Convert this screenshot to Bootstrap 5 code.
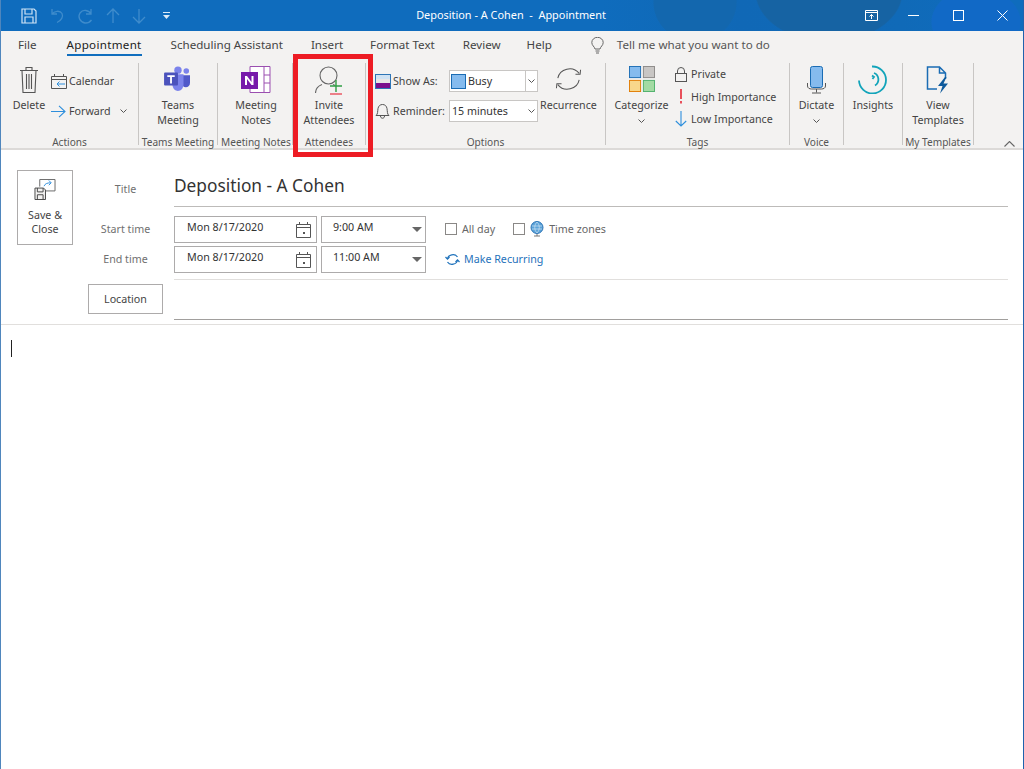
<!DOCTYPE html>
<html lang="en">
  <head>
    <meta charset="UTF-8" />
    <title>Deposition - A Cohen - Appointment</title>
    <link href="https://cdn.jsdelivr.net/npm/bootstrap@5.3.0/dist/css/bootstrap.min.css" rel="stylesheet" />
    <style>
      html, body { height: 100%; overflow: hidden; }
      body { font-family: "Noto Sans", "Open Sans", sans-serif; font-size: 10.7px; color: #444; background: #fff; }
      .app-frame { height: 769px; border-left: 1px solid #4f86bd; border-right: 1px solid #1f62ad; position: relative; display: flex; flex-direction: column; }

      /* title bar */
      .title-bar { height: 31px; flex: none; color: #fff; position: relative; display: flex; background:
          radial-gradient(ellipse 74px 50px at 828px -8px, #1663a3 98%, transparent),
          radial-gradient(ellipse 42px 40px at 694px 2px, #1367ae 98%, transparent),
          radial-gradient(ellipse 45px 34px at 975px 22px, #1169c6 98%, transparent),
          linear-gradient(90deg, #0f6cbd 0 600px, #1068b6 740px, #106ab8 900px, #0f6cbd 1000px); }
      .qat { padding-left: 20px; gap: 12px; display: flex; align-items: center; }
      .qat-drop { margin-left: 4px; }
      .doc-title { left: -2px; right: 0; top: 7px; text-align: center; font-size: 10.9px; position: absolute; }
      .win-btns { margin-left: auto; display: flex; position: relative; }
      .win-btn { width: 46px; height: 31px; display: flex; align-items: center; justify-content: center; }
      .win-restore { width: 39px; }
      .win-min { width: 44px; }
      .win-close { width: 42px; }

      /* tabs */
      .tab-row { height: 29px; flex: none; background: #f3f2f1; padding-left: 17px; font-size: 11.6px; align-items: flex-start; }
      .tab-row .nav-link { padding: 0; color: #444; height: 25px; line-height: 28px; position: relative; }
      .tab-row .nav-link.sel { color: #222; letter-spacing: .3px; }
      .tab-row .nav-link.sel::after { content: ""; position: absolute; left: 0; right: 0; bottom: 0; height: 2px; background: #106ebe; }
      .tab-file { margin-right: 30px; }
      .tab-appt { margin-right: 29px; }
      .tab-sched { margin-right: 28px; }
      .tab-insert { margin-right: 27px; }
      .tab-format { margin-right: 28px; }
      .tab-review { margin-right: 26px; }
      .tab-help { margin-right: 39px; }
      .tell-me { color: #555; gap: 13px; height: 28px; }

      /* ribbon */
      .ribbon { height: 90px; flex: none; background: #f3f2f1; border-bottom: 2px solid #dcdad8; display: flex; position: relative; }
      .rgroup { height: 82px; display: flex; flex-direction: column; border-right: 1px solid #c8c6c4; flex: none; margin-top: 3px; }
      .rgroup-body { flex: 1; display: flex; min-height: 0; }
      .rgroup-name { height: 14px; line-height: 14px; text-align: center; color: #555; font-size: 10.1px; white-space: nowrap; margin-bottom: -4px; margin-top: -10px; flex: none; }
      .w-actions { width: 138px; } .w-teams { width: 79px; } .w-notes { width: 75px; } .w-att { width: 73px; }
      .w-opts { width: 240px; } .w-tags { width: 184px; } .w-voice { width: 54px; } .w-ins { width: 59px; } .w-tpl { width: 71px; }
      .w-notes .rgroup-name { padding-left: 2px; }
      .big-btn { display: flex; flex-direction: column; align-items: center; text-align: center; line-height: 15px; white-space: nowrap; color: #444; padding-top: 3px; }
      .big-btn svg { display: block; flex: none; }
      .big-btn .txt { margin-top: 4px; }
      .btn-delete { margin-left: 11px; width: 34px; }
      .btn-delete .txt { margin-top: 4px; }
      .btn-teams .txt { margin-top: 7px; }
      .btn-notes { padding-left: 2px; }
      .btn-notes .txt { margin-top: 5px; }
      .btn-invite .txt { margin-top: 3px; }
      .btn-recur { margin-left: 2px; }
      .btn-recur .txt { margin-top: 6px; }
      .btn-categ { margin-left: 10px; width: 51px; }
      .btn-categ .txt { margin-top: 6px; }
      .btn-insights { padding-top: 2px; }
      .btn-insights .txt { margin-top: 4px; }
      .btn-view .txt { margin-top: 4px; }
      .caret-mini { width: 7px; height: 4px; flex: none; }
      .big-btn .caret-mini { margin-top: 6px; }
      .mini-row { display: flex; align-items: center; white-space: nowrap; }
      .action-col { margin-left: 5px; }
      .action-row { height: 22px; }
      .action-cal { margin-top: 7px; }
      .action-fwd { margin-top: 8px; }
      .action-cal span { margin-left: 2px; }
      .action-fwd span { margin-left: 3px; }
      .action-fwd .caret-mini { margin-left: 9px; }
      .opt-col { margin-left: 9px; width: 163px; }
      .opt-show { margin-top: 7px; }
      .opt-remind { margin-top: 8px; }
      .opt-ico { width: 18px; flex: none; }
      .opt-lbl { width: 56px; flex: none; }
      .combo-box { background: #fff; border: 1px solid #c8c6c4; height: 22px; width: 89px; display: flex; align-items: center; color: #333; }
      .combo-remind { padding-left: 2px; }
      .combo-remind .caret-mini { margin-left: auto; margin-right: 2px; }
      .busy-swatch { width: 15px; height: 15px; background: #85bbee; border: 1px solid #1a6cb4; margin-left: 1px; margin-right: 2px; flex: none; }
      .combo-drop { margin-left: auto; width: 12px; height: 100%; border-left: 1px solid #c8c6c4; display: flex; align-items: center; justify-content: center; }
      .tag-col { margin-left: 8px; }
      .tag-row { height: 22.5px; gap: 4px; }
      .collapse-mark { position: absolute; right: 8px; bottom: 1px; }
      .red-mark { position: absolute; left: 292px; top: 54px; width: 80px; height: 103px; border: 5px solid #ed1c24; z-index: 5; pointer-events: none; }

      /* form */
      .appt-form { height: 175px; flex: none; border-bottom: 1px solid #e1dfdd; color: #666; display: flex; }
      .save-close { width: 56px; height: 75px; margin: 20px 0 0 16px; border: 1px solid #adabab; border-radius: 0; background: #fff; color: #444; font-size: 10.7px; line-height: 14px; padding: 0; flex: none; }
      .save-close svg { display: block; margin: 0 auto 8px; }
      .form-side { margin-left: 15px; flex: 1; margin-right: 15px; }
      .lbl-col { width: 75px; flex: none; text-align: center; color: #707070; }
      .title-line { height: 57px; display: flex; }
      .title-lbl { padding-top: 31px; }
      .title-field { flex: 1; margin-left: 11px; height: 38px; margin-top: 19px; border-bottom: 1px solid #bdbbb9; font-size: 17.3px; color: #333; line-height: 33px; }
      .time-row { height: 27px; margin-top: 3px; display: flex; align-items: center; }
      .time-start { margin-top: 9px; }
      .field-box { height: 27px; border: 1px solid #adabab; color: #333; display: flex; align-items: center; background: #fff; }
      .date-field { width: 143px; margin-left: 11px; padding-left: 12px; padding-bottom: 4px; }
      .date-field svg { margin-left: auto; margin-right: 5px; margin-top: 4px; }
      .time-field { width: 105px; margin-left: 4px; padding-left: 11px; padding-bottom: 4px; }
      .tri-down { margin-left: auto; margin-right: 3px; margin-top: 4px; width: 0; height: 0; border-left: 5px solid transparent; border-right: 5px solid transparent; border-top: 5px solid #666; }
      .after-time { margin-left: 19px; display: flex; align-items: center; }
      input.form-check-input.check-box[type=checkbox] { width: 12px; height: 12px; margin: 0 5px 0 0; border: 1px solid #8a8886; border-radius: 0; flex: none; }
      input.form-check-input.tz-check[type=checkbox] { margin-left: 18px; }
      .tz-text { margin-left: 5px; }
      .make-rec { color: #1f72bb; gap: 4px; }
      .thin-line { height: 1px; background: #e1dfdd; margin-left: 86px; margin-top: 6px; }
      .loc-row { display: flex; margin-top: 4px; }
      .loc-btn { width: 75px; height: 30px; border: 1px solid #adabab; border-radius: 0; background: #fff; color: #444; font-size: 10.7px; padding: 0; }
      .loc-field { flex: 1; margin-left: 11px; height: 36px; border-bottom: 1px solid #a19f9d; }
      .body-area { flex: 1; padding: 15px 0 0 10px; }
      .text-caret { width: 1px; height: 17px; background: #222; }
    </style>
  </head>
  <body>
    <div class="app-frame">
      <div class="title-bar">
        <div class="qat">
          <svg width="16" height="16" viewBox="0 0 16 16" fill="none" stroke="#cfe3f5" stroke-width="1.2"><path d="M1 1h12l2 2v12H1z"/><path d="M4 1v5h7V1M4 15V9h8v6"/></svg>
          <svg width="16" height="16" viewBox="0 0 16 16" fill="none" stroke="#3f8ccc" stroke-width="1.3"><path d="M3 1v5h5M3 6c2-3 8-4 10-.5 1.500 3-.5 7-5 9"/></svg>
          <svg width="17" height="16" viewBox="0 0 17 16" fill="none" stroke="#3f8ccc" stroke-width="1.3"><path d="M14 1v5H9M14 6C12 2 6 1 3 5c-2.500 4 0 9 5 10 3 .2 5-1 6.500-3"/></svg>
          <svg width="14" height="16" viewBox="0 0 14 16" fill="none" stroke="#3f8ccc" stroke-width="1.3"><path d="M7 15V1M1 7l6-6 6 6"/></svg>
          <svg width="14" height="16" viewBox="0 0 14 16" fill="none" stroke="#3f8ccc" stroke-width="1.3"><path d="M7 1v14M1 9l6 6 6-6"/></svg>
          <svg class="qat-drop" width="9" height="8" viewBox="0 0 9 8" fill="#dcebf7"><rect x="1" y="0" width="7" height="1"/><path d="M1 3h7L4.500 7z"/></svg>
        </div>
        <div class="doc-title">Deposition - A Cohen&nbsp; -&nbsp; Appointment</div>
        <div class="win-btns">
          <div class="win-btn win-restore"><svg width="13" height="11" viewBox="0 0 13 11" fill="none" stroke="#fff"><path d="M.5.500h12v10H.5zM.5 2.500h12M6.500 9V4.500M4.500 6.500l2-2 2 2"/></svg></div>
          <div class="win-btn win-min"><svg width="11" height="11" viewBox="0 0 11 11" stroke="#fff"><path d="M0 5.500h11"/></svg></div>
          <div class="win-btn"><svg width="11" height="11" viewBox="0 0 11 11" fill="none" stroke="#fff"><rect x=".5" y=".5" width="10" height="10"/></svg></div>
          <div class="win-btn win-close"><svg width="11" height="11" viewBox="0 0 11 11" stroke="#fff"><path d="M.5.500l10 10M10.500.500l-10 10"/></svg></div>
        </div>
      </div>

      <ul class="nav tab-row flex-nowrap">
        <li class="nav-item tab-file"><a class="nav-link">File</a></li>
        <li class="nav-item tab-appt"><a class="nav-link sel">Appointment</a></li>
        <li class="nav-item tab-sched"><a class="nav-link">Scheduling Assistant</a></li>
        <li class="nav-item tab-insert"><a class="nav-link">Insert</a></li>
        <li class="nav-item tab-format"><a class="nav-link">Format Text</a></li>
        <li class="nav-item tab-review"><a class="nav-link">Review</a></li>
        <li class="nav-item tab-help"><a class="nav-link">Help</a></li>
        <li class="nav-item d-flex align-items-center tell-me">
          <svg width="13" height="17" viewBox="0 0 13 17" fill="none" stroke="#666"><path d="M4 12C3.500 9.500.8 8.500.8 5.500a5.700 5.200 0 0 1 11.400 0c0 3-2.700 4-3.200 6.500zM4.500 14h4M5 16h3"/></svg>
          <span>Tell me what you want to do</span>
        </li>
      </ul>

      <div class="ribbon">
        <div class="rgroup w-actions">
          <div class="rgroup-body">
            <div class="big-btn btn-delete">
              <svg width="20" height="28" viewBox="0 0 20 28" fill="none" stroke="#555" stroke-width="1.1"><path d="M1 4.500h18M7 4V1.500h6V4M3 4.500l1 22h12l1-22M7.500 8v15M10 8v15M12.500 8v15"/></svg>
              <span class="txt">Delete</span>
            </div>
            <div class="action-col">
              <div class="mini-row action-row action-cal">
                <svg width="16" height="15" viewBox="0 0 16 15" fill="none" stroke="#555"><path d="M.5 2.500h15v12H.5zM.5 5.500h15M3.500 0v3M12.500 0v3"/><path d="M14 10H6M8.500 7.500 6 10l2.500 2.500" stroke="#2e8fdc"/></svg>
                <span>Calendar</span>
              </div>
              <div class="mini-row action-row action-fwd">
                <svg width="15" height="13" viewBox="0 0 15 13" fill="none" stroke="#2e8fdc" stroke-width="1.1"><path d="M0 6.500h14M8 .8l6 5.700-6 5.700"/></svg>
                <span>Forward</span>
                <svg class="caret-mini" viewBox="0 0 7 4" fill="none" stroke="#555"><path d="M.5.500 3.500 3.500 6.500.500"/></svg>
              </div>
            </div>
          </div>
          <div class="rgroup-name">Actions</div>
        </div>

        <div class="rgroup w-teams">
          <div class="rgroup-body justify-content-center">
            <div class="big-btn btn-teams">
              <svg width="27" height="25" viewBox="0 0 29 27">
                <circle cx="24" cy="5.500" r="3" fill="#7b83eb"/><path d="M19 10h9v8c0 3-2 5-4.500 5S19 21 19 18z" fill="#5059c9"/>
                <circle cx="15" cy="4.500" r="4" fill="#7b83eb"/><path d="M9 9h12v11c0 4-3 7-6 7s-6-3-6-7z" fill="#7b83eb"/>
                <rect x="0" y="7" width="15" height="14" rx="1" fill="#4b53bc"/><path d="M3.500 10h8v2H8.500v7H6.500v-7h-3z" fill="#fff"/>
              </svg>
              <span class="txt">Teams<br />Meeting</span>
            </div>
          </div>
          <div class="rgroup-name">Teams Meeting</div>
        </div>

        <div class="rgroup w-notes">
          <div class="rgroup-body justify-content-center">
            <div class="big-btn btn-notes">
              <svg width="30" height="27" viewBox="0 0 30 27">
                <path d="M9 .5h20v26H9z" fill="#fff" stroke="#9b4fb0"/><path d="M23 1v25M23 9h6M23 17h6" stroke="#9b4fb0" fill="none"/>
                <rect x="0" y="6" width="17" height="17" fill="#7719aa"/><path d="M4 19V10h2l4.500 6v-6h2v9h-2L6 13v6z" fill="#fff"/>
              </svg>
              <span class="txt">Meeting<br />Notes</span>
            </div>
          </div>
          <div class="rgroup-name">Meeting Notes</div>
        </div>

        <div class="rgroup w-att">
          <div class="rgroup-body justify-content-center">
            <div class="big-btn btn-invite">
              <svg width="29" height="29" viewBox="0 0 29 29" fill="none">
                <circle cx="13.500" cy="9.500" r="8.500" stroke="#666" stroke-width="1.100"/>
                <path d="M.5 27c0-4 2.500-7 6.500-8.500M18 18.500c1 .3 1.500.6 2 1" stroke="#666" stroke-width="1.100"/>
                <path d="M21 14v12M15 20h12" stroke="#2f9e44" stroke-width="1.400"/>
                <path d="M15 28h12" stroke="#e8505b" stroke-width="1.400"/>
              </svg>
              <span class="txt">Invite<br />Attendees</span>
            </div>
          </div>
          <div class="rgroup-name">Attendees</div>
        </div>

        <div class="rgroup w-opts">
          <div class="rgroup-body">
            <div class="opt-col">
              <div class="mini-row opt-show">
                <span class="opt-ico"><svg class="d-block" width="16" height="15" viewBox="0 0 16 15" fill="none"><rect x=".5" y=".5" width="15" height="14" fill="#fff" stroke="#2e75b6"/><path d="M1 1h14v4H1z" fill="#cfe2f3"/><path d="M1 5h14v4H1z" fill="#e7e6e6"/><path d="M1 9h14v5H1z" fill="#7a0f8c"/></svg></span>
                <span class="opt-lbl">Show As:</span>
                <div class="combo-box">
                  <span class="busy-swatch"></span>
                  <span>Busy</span>
                  <span class="combo-drop"><svg class="caret-mini" viewBox="0 0 7 4" fill="none" stroke="#555"><path d="M.5.500 3.500 3.500 6.500.500"/></svg></span>
                </div>
              </div>
              <div class="mini-row opt-remind">
                <span class="opt-ico"><svg class="d-block" width="15" height="16" viewBox="0 0 15 16" fill="none" stroke="#555"><path d="M1 12.500c2-1.500 1.500-4 2-7C3.500 3 5 1.500 7.500 1.500S11.500 3 12 5.500c.5 3 0 5.500 2 7zM5.500 13c0 3 4 3 4 0"/></svg></span>
                <span class="opt-lbl">Reminder:</span>
                <div class="combo-box combo-remind">
                  <span>15 minutes</span>
                  <svg class="caret-mini" viewBox="0 0 7 4" fill="none" stroke="#555"><path d="M.5.500 3.500 3.500 6.500.500"/></svg>
                </div>
              </div>
            </div>
            <div class="big-btn btn-recur">
              <svg width="31" height="26" viewBox="0 0 31 28" fill="none" stroke="#555" stroke-width="1.100"><path d="M4 13C6 3 20-1 27 8M27 15C25 25 11 29 4 20"/><path d="M23 9h5l.5-5M8 19H3l-.5 5"/></svg>
              <span class="txt">Recurrence</span>
            </div>
          </div>
          <div class="rgroup-name">Options</div>
        </div>

        <div class="rgroup w-tags">
          <div class="rgroup-body">
            <div class="big-btn btn-categ">
              <svg width="28" height="26" viewBox="0 0 28 28"><rect x=".5" y=".5" width="12" height="12" fill="#85bbee" stroke="#1a6cb4"/><rect x="15.500" y=".5" width="12" height="12" fill="#c8c6c4" stroke="#8a8886"/><rect x=".5" y="15.500" width="12" height="12" fill="#f8d78a" stroke="#e07b00"/><rect x="15.500" y="15.500" width="12" height="12" fill="#a3dba3" stroke="#4caf6a"/></svg>
              <span class="txt">Categorize</span>
              <svg class="caret-mini" viewBox="0 0 7 4" fill="none" stroke="#555"><path d="M.5.500 3.500 3.500 6.500.500"/></svg>
            </div>
            <div class="tag-col">
              <div class="mini-row tag-row">
                <svg width="12" height="15" viewBox="0 0 12 15" fill="none" stroke="#555"><rect x=".5" y="6.500" width="11" height="8"/><path d="M2.500 6.500V4a3.500 3.500 0 0 1 7 0v2.500"/></svg>
                <span>Private</span>
              </div>
              <div class="mini-row tag-row">
                <svg width="12" height="15" viewBox="0 0 12 15" fill="#e8505b"><path d="M5 0h2v10H5zM5 12h2v2.500H5z"/></svg>
                <span>High Importance</span>
              </div>
              <div class="mini-row tag-row">
                <svg width="12" height="16" viewBox="0 0 12 16" fill="none" stroke="#2e8fdc" stroke-width="1.100"><path d="M6 0v15M.8 10l5.200 5 5.200-5"/></svg>
                <span>Low Importance</span>
              </div>
            </div>
          </div>
          <div class="rgroup-name">Tags</div>
        </div>

        <div class="rgroup w-voice">
          <div class="rgroup-body justify-content-center">
            <div class="big-btn btn-view">
              <svg width="19" height="28" viewBox="0 0 19 28" fill="none"><rect x="3.500" y=".5" width="12" height="21" rx="2" fill="#85bbee" stroke="#1a6cb4"/><path d="M.5 17v3c0 2 2 3 4 3h10c2 0 4-1 4-3v-3M9.500 23v3.500M5 27h9" stroke="#555"/></svg>
              <span class="txt">Dictate</span>
              <svg class="caret-mini" viewBox="0 0 7 4" fill="none" stroke="#555"><path d="M.5.500 3.500 3.500 6.500.500"/></svg>
            </div>
          </div>
          <div class="rgroup-name">Voice</div>
        </div>

        <div class="rgroup w-ins">
          <div class="rgroup-body justify-content-center">
            <div class="big-btn btn-insights">
              <svg width="30" height="29" viewBox="0 0 30 29" fill="none" stroke="#12a4ba" stroke-width="1.800"><path d="M14 1.500a13.500 13.500 0 1 1-13 14"/><path d="M16 8a7 7 0 0 1 1 12.500"/><path d="M14 10.500l2 1.500-1.500 2"/></svg>
              <span class="txt">Insights</span>
            </div>
          </div>
          <div class="rgroup-name">&nbsp;</div>
        </div>

        <div class="rgroup w-tpl">
          <div class="rgroup-body justify-content-center">
            <div class="big-btn btn-view">
              <svg width="24" height="28" viewBox="0 0 24 28" fill="none"><path d="M11 23H1.500V1h12l6 6v6M13.500 1v6h6" stroke="#1a6cb4" stroke-width="1.500"/><path d="M19 11l-7 9h4.500l-2.500 7.500 8-10h-4.500l3-6.500z" fill="#0e5a9c"/></svg>
              <span class="txt">View<br />Templates</span>
            </div>
          </div>
          <div class="rgroup-name">My Templates</div>
        </div>

        <svg class="collapse-mark" width="11" height="6" viewBox="0 0 11 6" fill="none" stroke="#666" stroke-width="1.100"><path d="M.5 5.500l5-5 5 5"/></svg>
      </div>

      <div class="red-mark"></div>

      <div class="appt-form">
        <button type="button" class="btn save-close">
          <svg width="22" height="21" viewBox="0 0 22 22" fill="none"><path d="M5.500 8V.5h16v12H12" stroke="#666"/><path d="M10 7.500c1-2.500 3-3.500 7-3.500M15 1.500 17.500 4 15 6.500" stroke="#2e8fdc"/><path d="M.5 9.500h9l2 2v10H.5z" fill="#f3f2f1" stroke="#444"/><path d="M3 9.500v4h6v-4M3 21.500v-5h6v5" stroke="#444"/></svg>
          Save &amp;<br />Close
        </button>
        <div class="form-side">
          <div class="title-line">
            <div class="lbl-col title-lbl">Title</div>
            <div class="title-field">Deposition - A Cohen</div>
          </div>
          <div class="time-row time-start">
            <div class="lbl-col">Start time</div>
            <div class="field-box date-field">Mon 8/17/2020
              <svg width="15" height="16" viewBox="0 0 15 16" fill="none" stroke="#555"><path d="M.5 2.500h14v13H.5zM.5 5.500h14M3.500 0v3M11.500 0v3"/><rect x="7" y="10" width="2" height="2" fill="#555" stroke="none"/></svg>
            </div>
            <div class="field-box time-field">9:00 AM<span class="tri-down"></span></div>
            <div class="after-time">
              <input class="form-check-input check-box" type="checkbox" aria-label="All day" />
              <span>All day</span>
              <input class="form-check-input check-box tz-check" type="checkbox" aria-label="Time zones" />
              <svg width="14" height="16" viewBox="0 0 14 16"><circle cx="7" cy="6.500" r="6" fill="#5ba3d9" stroke="#2e75b6"/><path d="M2 5h10M2 8h10M7 1c-3 3-3 8 0 11M7 1c3 3 3 8 0 11" stroke="#cfe2f3" stroke-width=".7" fill="none"/><path d="M4 15h6M7 13v2" stroke="#777"/></svg>
              <span class="tz-text">Time zones</span>
            </div>
          </div>
          <div class="time-row">
            <div class="lbl-col">End time</div>
            <div class="field-box date-field">Mon 8/17/2020
              <svg width="15" height="16" viewBox="0 0 15 16" fill="none" stroke="#555"><path d="M.5 2.500h14v13H.5zM.5 5.500h14M3.500 0v3M11.500 0v3"/><rect x="7" y="10" width="2" height="2" fill="#555" stroke="none"/></svg>
            </div>
            <div class="field-box time-field">11:00 AM<span class="tri-down"></span></div>
            <div class="after-time make-rec">
              <svg width="15" height="13" viewBox="0 0 15 13" fill="none" stroke="#1f72bb" stroke-width="1.200"><path d="M2.500 6C3 1.500 10 0 12.500 4M12.500 7C12 11.500 5 13 2.500 9"/><path d="M.5 4l2 2.200L4.500 4M10.500 9l2-2.200 2 2.200"/></svg>
              <span>Make Recurring</span>
            </div>
          </div>
          <div class="thin-line"></div>
          <div class="loc-row">
            <button type="button" class="btn loc-btn">Location</button>
            <div class="loc-field"></div>
          </div>
        </div>
      </div>

      <div class="body-area"><div class="text-caret"></div></div>
    </div>

    <script src="https://cdn.jsdelivr.net/npm/bootstrap@5.3.0/dist/js/bootstrap.bundle.min.js"></script>
  </body>
</html>
